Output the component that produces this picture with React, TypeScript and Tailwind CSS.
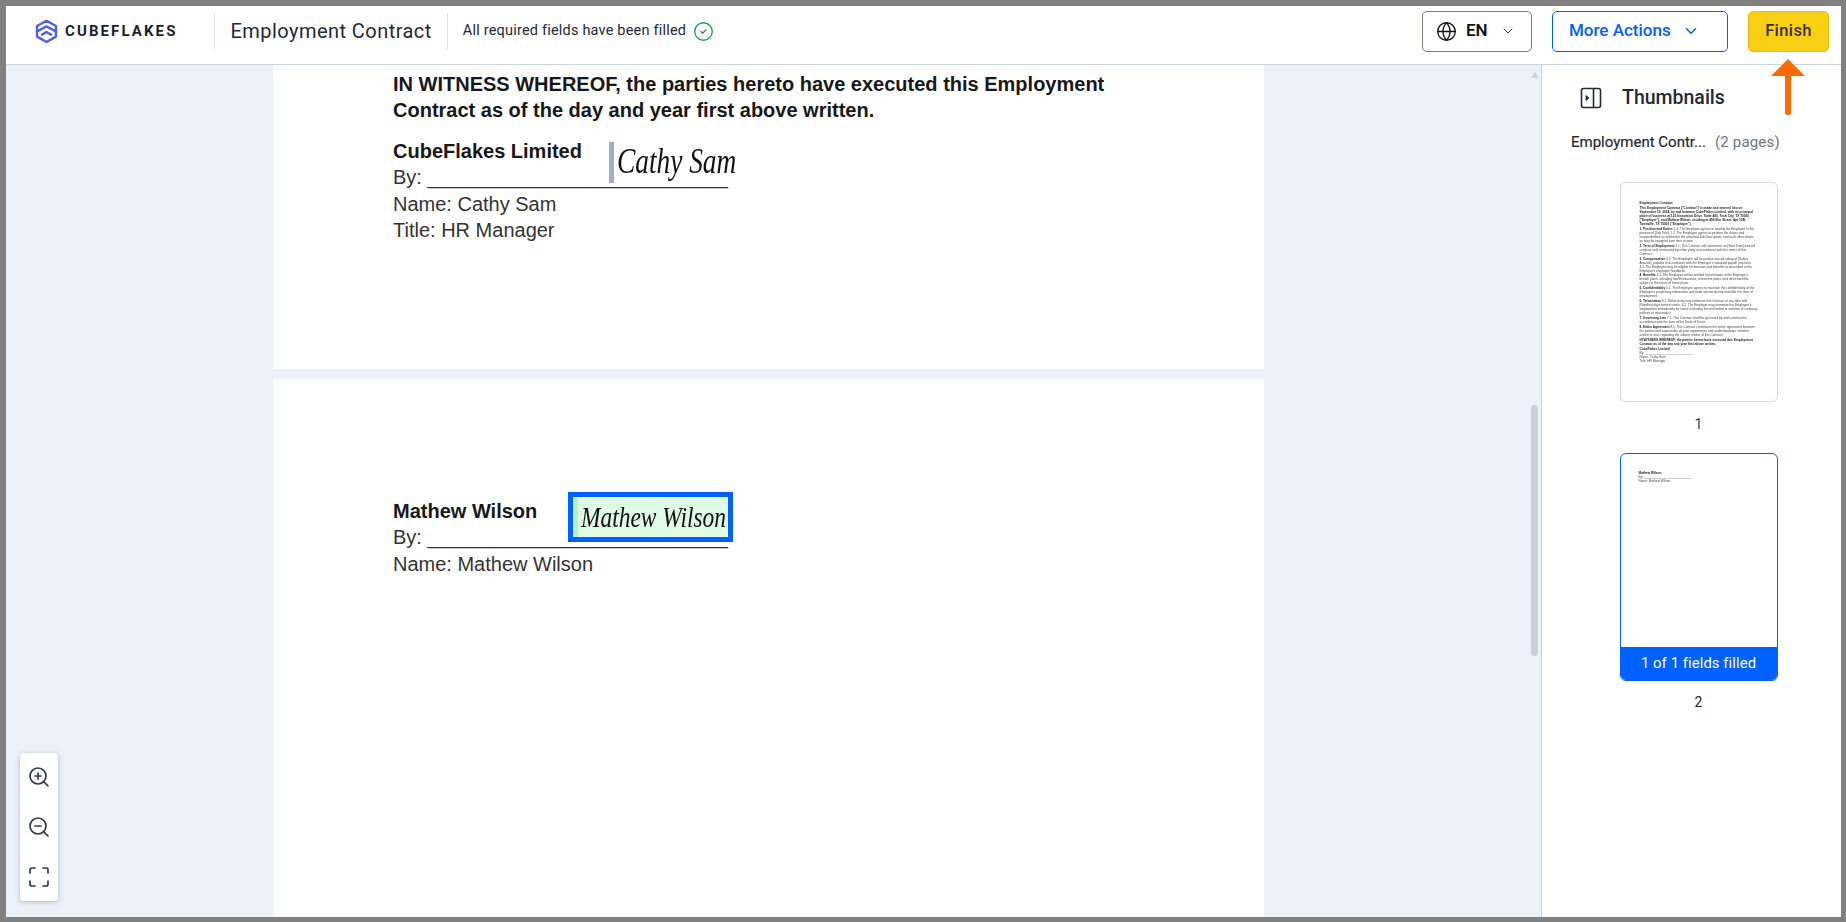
import React from 'react';
import { ChevronDown, CircleCheck, Globe, Maximize, ZoomIn, ZoomOut } from 'lucide-react';

const THUMB_ONE: { lead?: string; text: string; bold?: boolean }[] = [
  { text: 'Employment Contract', bold: true },
  {
    text: 'This Employment Contract ("Contract") is made and entered into on September 30, 2024, by and between CubeFlakes Limited, with its principal place of business at 123 Innovation Drive, Suite 400, Tech City, TX 75000 ("Employer"), and Mathew Wilson, residing at 456 Elm Street, Apt 10B, Townville, TX 75001 ("Employee").',
    bold: true,
  },
  { lead: '1. Position and Duties', text: ' 1.1. The Employer agrees to employ the Employee in the position of [Job Title]. 1.2. The Employee agrees to perform the duties and responsibilities as outlined in the attached Job Description, and such other duties as may be assigned from time to time.' },
  { lead: '2. Term of Employment', text: ' 2.1. This Contract will commence on [Start Date] and will continue until terminated by either party in accordance with the terms of this Contract.' },
  { lead: '3. Compensation', text: ' 3.1. The Employee will be paid an annual salary of [Salary Amount], payable in accordance with the Employer\'s standard payroll practices. 3.2. The Employee may be eligible for bonuses and benefits as described in the Employer\'s employee handbook.' },
  { lead: '4. Benefits', text: ' 4.1. The Employee will be entitled to participate in the Employer\'s benefit plans, including health insurance, retirement plans, and other benefits, subject to the terms of those plans.' },
  { lead: '5. Confidentiality', text: ' 5.1. The Employee agrees to maintain the confidentiality of the Employer\'s proprietary information and trade secrets during and after the term of employment.' },
  { lead: '6. Termination', text: ' 6.1. Either party may terminate this Contract at any time with [Number] days written notice. 6.2. The Employer may terminate the Employee\'s employment immediately for cause, including but not limited to violation of company policies or misconduct.' },
  { lead: '7. Governing Law', text: ' 7.1. This Contract shall be governed by and construed in accordance with the laws of the State of Texas.' },
  { lead: '8. Entire Agreement', text: ' 8.1. This Contract constitutes the entire agreement between the parties and supersedes all prior agreements and understandings, whether written or oral, regarding the subject matter of this Contract.' },
  { text: 'IN WITNESS WHEREOF, the parties hereto have executed this Employment Contract as of the day and year first above written.', bold: true },
];

const CubeLogo = () => (
  <svg width="23" height="25" viewBox="0 0 23 25" fill="none" stroke="#4f5fe8" strokeWidth="2.4" strokeLinejoin="round" strokeLinecap="round">
    <path d="M2 12.5V7L11.5 1.8L21 7V12.5L11.5 7.4Z" />
    <path d="M2 12.5V17.6L7 20.4M21 12.5V17.6L11.5 23L7 20.4" />
    <path d="M7 15.6L11.5 13L16 15.6" />
  </svg>
);

const PanelIcon = () => (
  <svg width="22" height="22" viewBox="0 0 22 22" fill="none" stroke="#1f2937" strokeWidth="1.6" strokeLinejoin="round">
    <rect x="1.5" y="1.5" width="19" height="19" rx="2" />
    <path d="M13.5 1.5V20.5" />
    <path d="M6 8.5L9 11L6 13.5Z" fill="#1f2937" strokeWidth="0.8" />
  </svg>
);

const PageLine = ({ children, bold }: { children: React.ReactNode; bold?: boolean }) => (
  <p className={bold ? 'font-bold text-[#181818]' : 'text-[#333333]'}>{children}</p>
);

const SIGNATURE_FONT = "font-['Liberation_Serif',serif] italic text-[#111111] origin-left";

const App: React.FC = () => {
  return (
    <div className="h-[922px] w-[1846px] overflow-hidden bg-[#808080] pt-[6px] pr-[5px] pb-[5px] pl-[6px] font-['Roboto',sans-serif]">
      <div className="relative flex h-full flex-col bg-white">
        <header className="flex h-[59px] shrink-0 items-center border-b border-[#c9d5e3] bg-white pb-[8px]">
          <div className="ml-[29px] flex items-center gap-[7px]">
            <CubeLogo />
            <span className="text-[15px] leading-none font-bold tracking-[2.1px] text-[#1c1f2a]">CUBEFLAKES</span>
          </div>
          <div className="ml-[36px] h-[36px] w-px bg-[#dfe3e8]" />
          <h1 className="ml-[16px] text-[20px] tracking-[0.45px] text-[#1f2937]">Employment Contract</h1>
          <div className="ml-[15px] h-[36px] w-px bg-[#dfe3e8]" />
          <span className="ml-[15px] text-[14.5px] tracking-[0.2px] text-[#1f2937]">All required fields have been filled</span>
          <CircleCheck size={21} strokeWidth={1.5} className="ml-[7px] text-[#16a34a]" />

          <div className="ml-auto flex items-center">
            <button className="flex h-[41px] w-[110px] items-center rounded-[5px] border border-[#7f7f70] pl-[13px]">
              <Globe size={21} strokeWidth={1.5} className="text-[#111111]" />
              <span className="ml-[9px] text-[17px] font-semibold text-[#111111]">EN</span>
              <ChevronDown size={16} strokeWidth={1.5} className="ml-[12px] text-[#333333]" />
            </button>
            <button className="ml-[20px] flex h-[41px] w-[176px] items-center rounded-[5px] border border-[#0061ff] pl-[16px]">
              <span className="text-[17px] font-medium text-[#0061ff]">More Actions</span>
              <ChevronDown size={18} strokeWidth={2} className="ml-[11px] text-[#0061ff]" />
            </button>
            <button className="mr-[12px] ml-[20px] h-[41px] w-[81px] rounded-[5px] border border-[#e6bd12] bg-[#f9cf14] text-[16.5px] font-medium tracking-[0.4px] text-[#333333]">
              Finish
            </button>
          </div>
        </header>

        <div className="flex min-h-0 flex-1">
          <main className="relative min-w-0 flex-1 overflow-hidden bg-[#ecf0f8]">
            <div className="ml-[267px] w-[991px] font-['Liberation_Sans',sans-serif] text-[20px] leading-[26.4px]">
              <section className="relative h-[304px] bg-white pt-[6px] pl-[120px]">
                <div className="w-[730px] font-bold text-[#181818]">
                  IN WITNESS WHEREOF, the parties hereto have executed this Employment Contract as of the day and year first above written.
                </div>
                <div className="mt-[14px]">
                  <PageLine bold>CubeFlakes Limited</PageLine>
                  <PageLine>By: ___________________________</PageLine>
                  <PageLine>Name: Cathy Sam</PageLine>
                  <PageLine>Title: HR Manager</PageLine>
                </div>
                <div className="absolute top-[77px] left-[336px] flex h-[41px] items-center border-l-[5px] border-[#a0aec4] pl-[3px]">
                  <span className={`${SIGNATURE_FONT} -mt-[4px] scale-x-[0.76] text-[36px] leading-none whitespace-nowrap`}>Cathy Sam</span>
                </div>
              </section>

              <section className="relative mt-[10px] h-[600px] bg-white pt-[119px] pl-[120px]">
                <PageLine bold>Mathew Wilson</PageLine>
                <PageLine>By: ___________________________</PageLine>
                <PageLine>Name: Mathew Wilson</PageLine>
                <div className="absolute top-[113px] left-[295px] flex h-[50px] w-[165px] items-center border-[5px] border-[#0061ff] bg-[#dffbe6]">
                  <div className="h-full w-[5px] shrink-0 bg-[#b2f5c0]" />
                  <span className={`${SIGNATURE_FONT} ml-[3px] scale-x-[0.78] text-[30px] leading-none whitespace-nowrap`}>Mathew Wilson</span>
                </div>
              </section>
            </div>

            {/* scrollbar */}
            <div className="absolute top-[7px] right-[2px] h-0 w-0 border-x-[4.5px] border-b-[6px] border-x-transparent border-b-[#c9d3de]" />
            <div className="absolute top-[340px] right-[3px] h-[251px] w-[7px] rounded-full bg-[#c9d3de]" />

            {/* zoom controls */}
            <div className="absolute bottom-[16px] left-[14px] flex h-[148px] w-[38px] flex-col items-center justify-between rounded-[4px] bg-white py-[12px] text-[#333a44] shadow-[0_1px_5px_rgba(100,116,139,0.45)]">
              <ZoomIn size={24} strokeWidth={1.7} />
              <ZoomOut size={24} strokeWidth={1.7} />
              <Maximize size={24} strokeWidth={1.7} />
            </div>
          </main>

          <aside className="flex w-[300px] shrink-0 flex-col overflow-hidden border-l border-[#c5ccd6] bg-white">
            <div className="mt-[22px] flex w-full items-center pl-[38px]">
              <PanelIcon />
              <span className="ml-[20px] text-[19.5px] leading-[22px] font-medium text-[#1f2937]">Thumbnails</span>
            </div>
            <div className="mt-[23px] flex w-full items-center pl-[29px] text-[15px] leading-[20px]">
              <span className="text-[#1f2937] [-webkit-text-stroke:0.2px_#1f2937]">Employment Contr...</span>
              <span className="ml-[9px] tracking-[0.2px] text-[#6b7785]">(2 pages)</span>
            </div>

            <div className="flex w-full flex-col items-center pl-[14px]">
              <div className="mt-[30px] h-[220px] w-[158px] overflow-hidden rounded-[6px] border border-[#cfd6df] bg-white pt-[18px] pr-[19px] pl-[19px] font-['Liberation_Sans',sans-serif] text-[3.2px] leading-[4px] text-[#444444] blur-[0.45px]">
                {THUMB_ONE.map((item, i) => (
                  <p key={i} className={`mb-[0.9px] ${item.bold ? 'font-bold text-[#222222]' : ''}`}>
                    {item.lead && <span className="font-bold text-[#222222]">{item.lead}</span>}
                    {item.text}
                  </p>
                ))}
                <p className="font-bold text-[#222222]">CubeFlakes Limited</p>
                <p>By: ___________________________</p>
                <p>Name: Cathy Sam</p>
                <p>Title: HR Manager</p>
              </div>
              <span className="mt-[12px] text-[14px] leading-[20px] text-[#1f3a5f]">1</span>

              <div className="mt-[19px] flex h-[228px] w-[158px] flex-col overflow-hidden rounded-[6px] border border-[#0061ff] bg-white">
                <div className="flex-1 pt-[17px] pl-[18px] font-['Liberation_Sans',sans-serif] text-[3.2px] leading-[4px] text-[#444444] blur-[0.4px]">
                  <p className="font-bold text-[#222222]">Mathew Wilson</p>
                  <p>By: ___________________________</p>
                  <p>Name: Mathew Wilson</p>
                </div>
                <div className="flex h-[33px] items-center justify-center bg-[#0061ff] text-[14.8px] tracking-[0.1px] text-white">
                  1 of 1 fields filled
                </div>
              </div>
              <span className="mt-[11px] text-[14px] leading-[20px] text-[#1f2937]">2</span>
            </div>
          </aside>
        </div>

        {/* annotation arrow pointing at Finish */}
        <svg className="absolute top-[53px] left-[1765px]" width="34" height="57" viewBox="0 0 34 57" fill="#ff6a00">
          <path d="M17 0L34 17H0Z" />
          <rect x="14" y="15" width="6" height="41" rx="2.5" />
        </svg>
      </div>
    </div>
  );
};

export default App;
